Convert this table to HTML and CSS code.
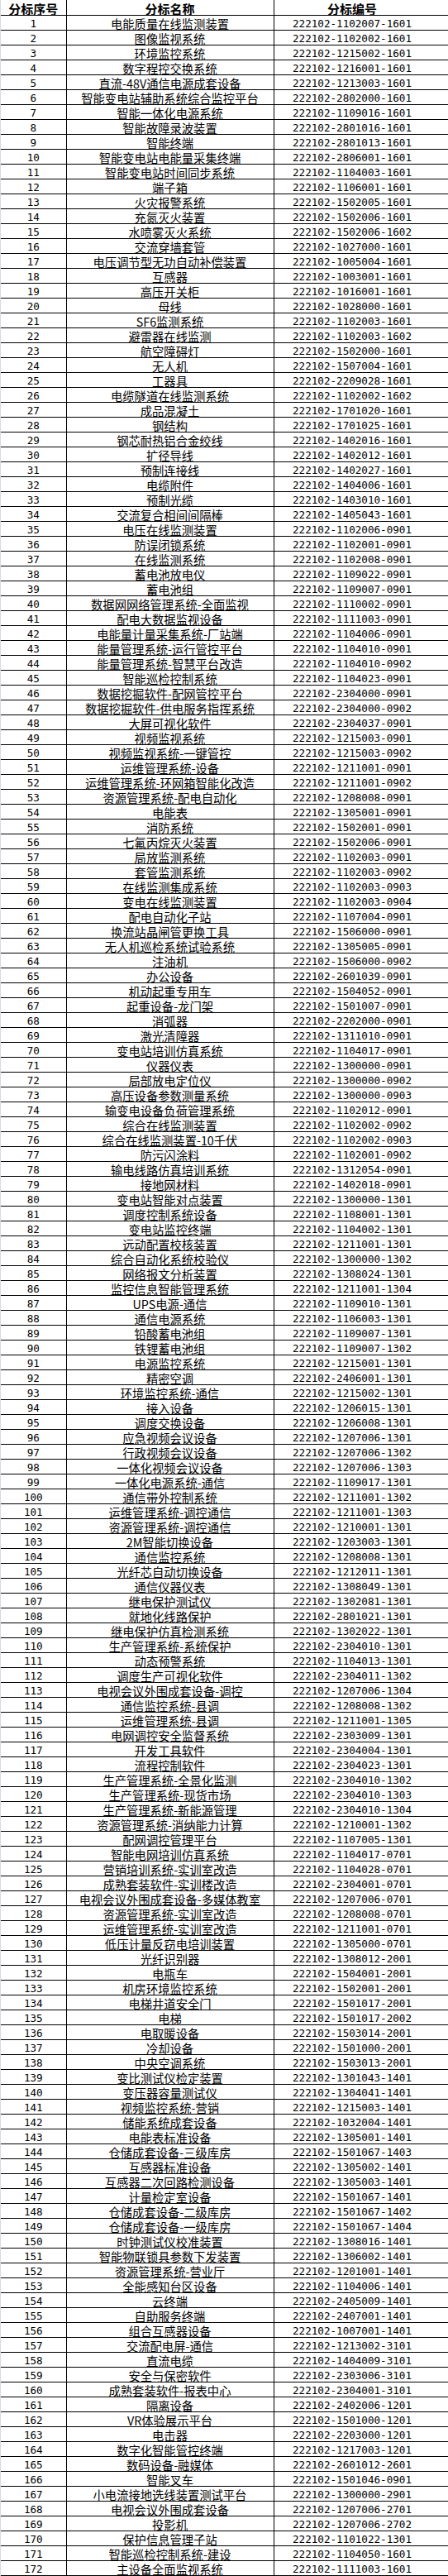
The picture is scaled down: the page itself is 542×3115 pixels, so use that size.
FILE: index.html
```html
<!DOCTYPE html>
<html lang="zh-CN">
<head>
<meta charset="utf-8">
<title>分标</title>
<link rel="stylesheet" href="styles.css">
</head>
<body>
<div class="sheet">
<table class="grid">
<colgroup><col class="c-no"><col class="c-name"><col class="c-code"></colgroup>
<thead>
<tr><th>分标序号</th><th>分标名称</th><th class="code">分标编号</th></tr>
</thead>
<tbody>
<tr><td class="n">1</td><td>电能质量在线监测装置</td><td class="n code">222102-1102007-1601</td></tr>
<tr><td class="n">2</td><td>图像监视系统</td><td class="n code">222102-1102002-1601</td></tr>
<tr><td class="n">3</td><td>环境监控系统</td><td class="n code">222102-1215002-1601</td></tr>
<tr><td class="n">4</td><td>数字程控交换系统</td><td class="n code">222102-1216001-1601</td></tr>
<tr><td class="n">5</td><td>直流-48V通信电源成套设备</td><td class="n code">222102-1213003-1601</td></tr>
<tr><td class="n">6</td><td>智能变电站辅助系统综合监控平台</td><td class="n code">222102-2802000-1601</td></tr>
<tr><td class="n">7</td><td>智能一体化电源系统</td><td class="n code">222102-1109016-1601</td></tr>
<tr><td class="n">8</td><td>智能故障录波装置</td><td class="n code">222102-2801016-1601</td></tr>
<tr><td class="n">9</td><td>智能终端</td><td class="n code">222102-2801013-1601</td></tr>
<tr><td class="n">10</td><td>智能变电站电能量采集终端</td><td class="n code">222102-2806001-1601</td></tr>
<tr><td class="n">11</td><td>智能变电站时间同步系统</td><td class="n code">222102-1104003-1601</td></tr>
<tr><td class="n">12</td><td>端子箱</td><td class="n code">222102-1106001-1601</td></tr>
<tr><td class="n">13</td><td>火灾报警系统</td><td class="n code">222102-1502005-1601</td></tr>
<tr><td class="n">14</td><td>充氮灭火装置</td><td class="n code">222102-1502006-1601</td></tr>
<tr><td class="n">15</td><td>水喷雾灭火系统</td><td class="n code">222102-1502006-1602</td></tr>
<tr><td class="n">16</td><td>交流穿墙套管</td><td class="n code">222102-1027000-1601</td></tr>
<tr><td class="n">17</td><td>电压调节型无功自动补偿装置</td><td class="n code">222102-1005004-1601</td></tr>
<tr><td class="n">18</td><td>互感器</td><td class="n code">222102-1003001-1601</td></tr>
<tr><td class="n">19</td><td>高压开关柜</td><td class="n code">222102-1016001-1601</td></tr>
<tr><td class="n">20</td><td>母线</td><td class="n code">222102-1028000-1601</td></tr>
<tr><td class="n">21</td><td>SF6监测系统</td><td class="n code">222102-1102003-1601</td></tr>
<tr><td class="n">22</td><td>避雷器在线监测</td><td class="n code">222102-1102003-1602</td></tr>
<tr><td class="n">23</td><td>航空障碍灯</td><td class="n code">222102-1502000-1601</td></tr>
<tr><td class="n">24</td><td>无人机</td><td class="n code">222102-1507004-1601</td></tr>
<tr><td class="n">25</td><td>工器具</td><td class="n code">222102-2209028-1601</td></tr>
<tr><td class="n">26</td><td>电缆隧道在线监测系统</td><td class="n code">222102-1102002-1602</td></tr>
<tr><td class="n">27</td><td>成品混凝土</td><td class="n code">222102-1701020-1601</td></tr>
<tr><td class="n">28</td><td>钢结构</td><td class="n code">222102-1701025-1601</td></tr>
<tr><td class="n">29</td><td>钢芯耐热铝合金绞线</td><td class="n code">222102-1402016-1601</td></tr>
<tr><td class="n">30</td><td>扩径导线</td><td class="n code">222102-1402012-1601</td></tr>
<tr><td class="n">31</td><td>预制连接线</td><td class="n code">222102-1402027-1601</td></tr>
<tr><td class="n">32</td><td>电缆附件</td><td class="n code">222102-1404006-1601</td></tr>
<tr><td class="n">33</td><td>预制光缆</td><td class="n code">222102-1403010-1601</td></tr>
<tr><td class="n">34</td><td>交流复合相间间隔棒</td><td class="n code">222102-1405043-1601</td></tr>
<tr><td class="n">35</td><td>电压在线监测装置</td><td class="n code">222102-1102006-0901</td></tr>
<tr><td class="n">36</td><td>防误闭锁系统</td><td class="n code">222102-1102001-0901</td></tr>
<tr><td class="n">37</td><td>在线监测系统</td><td class="n code">222102-1102008-0901</td></tr>
<tr><td class="n">38</td><td>蓄电池放电仪</td><td class="n code">222102-1109022-0901</td></tr>
<tr><td class="n">39</td><td>蓄电池组</td><td class="n code">222102-1109007-0901</td></tr>
<tr><td class="n">40</td><td>数据网网络管理系统-全面监视</td><td class="n code">222102-1110002-0901</td></tr>
<tr><td class="n">41</td><td>配电大数据监视设备</td><td class="n code">222102-1111003-0901</td></tr>
<tr><td class="n">42</td><td>电能量计量采集系统-厂站端</td><td class="n code">222102-1104006-0901</td></tr>
<tr><td class="n">43</td><td>能量管理系统-运行管控平台</td><td class="n code">222102-1104010-0901</td></tr>
<tr><td class="n">44</td><td>能量管理系统-智慧平台改造</td><td class="n code">222102-1104010-0902</td></tr>
<tr><td class="n">45</td><td>智能巡检控制系统</td><td class="n code">222102-1104023-0901</td></tr>
<tr><td class="n">46</td><td>数据挖掘软件-配网管控平台</td><td class="n code">222102-2304000-0901</td></tr>
<tr><td class="n">47</td><td>数据挖掘软件-供电服务指挥系统</td><td class="n code">222102-2304000-0902</td></tr>
<tr><td class="n">48</td><td>大屏可视化软件</td><td class="n code">222102-2304037-0901</td></tr>
<tr><td class="n">49</td><td>视频监视系统</td><td class="n code">222102-1215003-0901</td></tr>
<tr><td class="n">50</td><td>视频监视系统-一键管控</td><td class="n code">222102-1215003-0902</td></tr>
<tr><td class="n">51</td><td>运维管理系统-设备</td><td class="n code">222102-1211001-0901</td></tr>
<tr><td class="n">52</td><td>运维管理系统-环网箱智能化改造</td><td class="n code">222102-1211001-0902</td></tr>
<tr><td class="n">53</td><td>资源管理系统-配电自动化</td><td class="n code">222102-1208008-0901</td></tr>
<tr><td class="n">54</td><td>电能表</td><td class="n code">222102-1305001-0901</td></tr>
<tr><td class="n">55</td><td>消防系统</td><td class="n code">222102-1502001-0901</td></tr>
<tr><td class="n">56</td><td>七氟丙烷灭火装置</td><td class="n code">222102-1502006-0901</td></tr>
<tr><td class="n">57</td><td>局放监测系统</td><td class="n code">222102-1102003-0901</td></tr>
<tr><td class="n">58</td><td>套管监测系统</td><td class="n code">222102-1102003-0902</td></tr>
<tr><td class="n">59</td><td>在线监测集成系统</td><td class="n code">222102-1102003-0903</td></tr>
<tr><td class="n">60</td><td>变电在线监测装置</td><td class="n code">222102-1102003-0904</td></tr>
<tr><td class="n">61</td><td>配电自动化子站</td><td class="n code">222102-1107004-0901</td></tr>
<tr><td class="n">62</td><td>换流站晶闸管更换工具</td><td class="n code">222102-1506000-0901</td></tr>
<tr><td class="n">63</td><td>无人机巡检系统试验系统</td><td class="n code">222102-1305005-0901</td></tr>
<tr><td class="n">64</td><td>注油机</td><td class="n code">222102-1506000-0902</td></tr>
<tr><td class="n">65</td><td>办公设备</td><td class="n code">222102-2601039-0901</td></tr>
<tr><td class="n">66</td><td>机动起重专用车</td><td class="n code">222102-1504052-0901</td></tr>
<tr><td class="n">67</td><td>起重设备-龙门架</td><td class="n code">222102-1501007-0901</td></tr>
<tr><td class="n">68</td><td>消弧器</td><td class="n code">222102-2202000-0901</td></tr>
<tr><td class="n">69</td><td>激光清障器</td><td class="n code">222102-1311010-0901</td></tr>
<tr><td class="n">70</td><td>变电站培训仿真系统</td><td class="n code">222102-1104017-0901</td></tr>
<tr><td class="n">71</td><td>仪器仪表</td><td class="n code">222102-1300000-0901</td></tr>
<tr><td class="n">72</td><td>局部放电定位仪</td><td class="n code">222102-1300000-0902</td></tr>
<tr><td class="n">73</td><td>高压设备参数测量系统</td><td class="n code">222102-1300000-0903</td></tr>
<tr><td class="n">74</td><td>输变电设备负荷管理系统</td><td class="n code">222102-1102012-0901</td></tr>
<tr><td class="n">75</td><td>综合在线监测装置</td><td class="n code">222102-1102002-0902</td></tr>
<tr><td class="n">76</td><td>综合在线监测装置-10千伏</td><td class="n code">222102-1102002-0903</td></tr>
<tr><td class="n">77</td><td>防污闪涂料</td><td class="n code">222102-1102001-0902</td></tr>
<tr><td class="n">78</td><td>输电线路仿真培训系统</td><td class="n code">222102-1312054-0901</td></tr>
<tr><td class="n">79</td><td>接地网材料</td><td class="n code">222102-1402018-0901</td></tr>
<tr><td class="n">80</td><td>变电站智能对点装置</td><td class="n code">222102-1300000-1301</td></tr>
<tr><td class="n">81</td><td>调度控制系统设备</td><td class="n code">222102-1108001-1301</td></tr>
<tr><td class="n">82</td><td>变电站监控终端</td><td class="n code">222102-1104002-1301</td></tr>
<tr><td class="n">83</td><td>远动配置校核装置</td><td class="n code">222102-1211001-1301</td></tr>
<tr><td class="n">84</td><td>综合自动化系统校验仪</td><td class="n code">222102-1300000-1302</td></tr>
<tr><td class="n">85</td><td>网络报文分析装置</td><td class="n code">222102-1308024-1301</td></tr>
<tr><td class="n">86</td><td>监控信息智能管理系统</td><td class="n code">222102-1211001-1304</td></tr>
<tr><td class="n">87</td><td>UPS电源-通信</td><td class="n code">222102-1109010-1301</td></tr>
<tr><td class="n">88</td><td>通信电源系统</td><td class="n code">222102-1106003-1301</td></tr>
<tr><td class="n">89</td><td>铅酸蓄电池组</td><td class="n code">222102-1109007-1301</td></tr>
<tr><td class="n">90</td><td>铁锂蓄电池组</td><td class="n code">222102-1109007-1302</td></tr>
<tr><td class="n">91</td><td>电源监控系统</td><td class="n code">222102-1215001-1301</td></tr>
<tr><td class="n">92</td><td>精密空调</td><td class="n code">222102-2406001-1301</td></tr>
<tr><td class="n">93</td><td>环境监控系统-通信</td><td class="n code">222102-1215002-1301</td></tr>
<tr><td class="n">94</td><td>接入设备</td><td class="n code">222102-1206015-1301</td></tr>
<tr><td class="n">95</td><td>调度交换设备</td><td class="n code">222102-1206008-1301</td></tr>
<tr><td class="n">96</td><td>应急视频会议设备</td><td class="n code">222102-1207006-1301</td></tr>
<tr><td class="n">97</td><td>行政视频会议设备</td><td class="n code">222102-1207006-1302</td></tr>
<tr><td class="n">98</td><td>一体化视频会议设备</td><td class="n code">222102-1207006-1303</td></tr>
<tr><td class="n">99</td><td>一体化电源系统-通信</td><td class="n code">222102-1109017-1301</td></tr>
<tr><td class="n">100</td><td>通信带外控制系统</td><td class="n code">222102-1211001-1302</td></tr>
<tr><td class="n">101</td><td>运维管理系统-调控通信</td><td class="n code">222102-1211001-1303</td></tr>
<tr><td class="n">102</td><td>资源管理系统-调控通信</td><td class="n code">222102-1210001-1301</td></tr>
<tr><td class="n">103</td><td>2M智能切换设备</td><td class="n code">222102-1203003-1301</td></tr>
<tr><td class="n">104</td><td>通信监控系统</td><td class="n code">222102-1208008-1301</td></tr>
<tr><td class="n">105</td><td>光纤芯自动切换设备</td><td class="n code">222102-1212011-1301</td></tr>
<tr><td class="n">106</td><td>通信仪器仪表</td><td class="n code">222102-1308049-1301</td></tr>
<tr><td class="n">107</td><td>继电保护测试仪</td><td class="n code">222102-1302081-1301</td></tr>
<tr><td class="n">108</td><td>就地化线路保护</td><td class="n code">222102-2801021-1301</td></tr>
<tr><td class="n">109</td><td>继电保护仿真检测系统</td><td class="n code">222102-1302022-1301</td></tr>
<tr><td class="n">110</td><td>生产管理系统-系统保护</td><td class="n code">222102-2304010-1301</td></tr>
<tr><td class="n">111</td><td>动态预警系统</td><td class="n code">222102-1104013-1301</td></tr>
<tr><td class="n">112</td><td>调度生产可视化软件</td><td class="n code">222102-2304011-1302</td></tr>
<tr><td class="n">113</td><td>电视会议外围成套设备-调控</td><td class="n code">222102-1207006-1304</td></tr>
<tr><td class="n">114</td><td>通信监控系统-县调</td><td class="n code">222102-1208008-1302</td></tr>
<tr><td class="n">115</td><td>运维管理系统-县调</td><td class="n code">222102-1211001-1305</td></tr>
<tr><td class="n">116</td><td>电网调控安全监督系统</td><td class="n code">222102-2303009-1301</td></tr>
<tr><td class="n">117</td><td>开发工具软件</td><td class="n code">222102-2304004-1301</td></tr>
<tr><td class="n">118</td><td>流程控制软件</td><td class="n code">222102-2304023-1301</td></tr>
<tr><td class="n">119</td><td>生产管理系统-全景化监测</td><td class="n code">222102-2304010-1302</td></tr>
<tr><td class="n">120</td><td>生产管理系统-现货市场</td><td class="n code">222102-2304010-1303</td></tr>
<tr><td class="n">121</td><td>生产管理系统-新能源管理</td><td class="n code">222102-2304010-1304</td></tr>
<tr><td class="n">122</td><td>资源管理系统-消纳能力计算</td><td class="n code">222102-1210001-1302</td></tr>
<tr><td class="n">123</td><td>配网调控管理平台</td><td class="n code">222102-1107005-1301</td></tr>
<tr><td class="n">124</td><td>智能电网培训仿真系统</td><td class="n code">222102-1104017-0701</td></tr>
<tr><td class="n">125</td><td>营销培训系统-实训室改造</td><td class="n code">222102-1104028-0701</td></tr>
<tr><td class="n">126</td><td>成熟套装软件-实训楼改造</td><td class="n code">222102-2304001-0701</td></tr>
<tr><td class="n">127</td><td>电视会议外围成套设备-多媒体教室</td><td class="n code">222102-1207006-0701</td></tr>
<tr><td class="n">128</td><td>资源管理系统-实训室改造</td><td class="n code">222102-1208008-0701</td></tr>
<tr><td class="n">129</td><td>运维管理系统-实训室改造</td><td class="n code">222102-1211001-0701</td></tr>
<tr><td class="n">130</td><td>低压计量反窃电培训装置</td><td class="n code">222102-1305000-0701</td></tr>
<tr><td class="n">131</td><td>光纤识别器</td><td class="n code">222102-1308012-2001</td></tr>
<tr><td class="n">132</td><td>电瓶车</td><td class="n code">222102-1504001-2001</td></tr>
<tr><td class="n">133</td><td>机房环境监控系统</td><td class="n code">222102-1502001-2001</td></tr>
<tr><td class="n">134</td><td>电梯井道安全门</td><td class="n code">222102-1501017-2001</td></tr>
<tr><td class="n">135</td><td>电梯</td><td class="n code">222102-1501017-2002</td></tr>
<tr><td class="n">136</td><td>电取暖设备</td><td class="n code">222102-1503014-2001</td></tr>
<tr><td class="n">137</td><td>冷却设备</td><td class="n code">222102-1501000-2001</td></tr>
<tr><td class="n">138</td><td>中央空调系统</td><td class="n code">222102-1503013-2001</td></tr>
<tr><td class="n">139</td><td>变比测试仪检定装置</td><td class="n code">222102-1301043-1401</td></tr>
<tr><td class="n">140</td><td>变压器容量测试仪</td><td class="n code">222102-1304041-1401</td></tr>
<tr><td class="n">141</td><td>视频监控系统-营销</td><td class="n code">222102-1215003-1401</td></tr>
<tr><td class="n">142</td><td>储能系统成套设备</td><td class="n code">222102-1032004-1401</td></tr>
<tr><td class="n">143</td><td>电能表标准设备</td><td class="n code">222102-1305001-1401</td></tr>
<tr><td class="n">144</td><td>仓储成套设备-三级库房</td><td class="n code">222102-1501067-1403</td></tr>
<tr><td class="n">145</td><td>互感器标准设备</td><td class="n code">222102-1305002-1401</td></tr>
<tr><td class="n">146</td><td>互感器二次回路检测设备</td><td class="n code">222102-1305003-1401</td></tr>
<tr><td class="n">147</td><td>计量检定室设备</td><td class="n code">222102-1501067-1401</td></tr>
<tr><td class="n">148</td><td>仓储成套设备-二级库房</td><td class="n code">222102-1501067-1402</td></tr>
<tr><td class="n">149</td><td>仓储成套设备-一级库房</td><td class="n code">222102-1501067-1404</td></tr>
<tr><td class="n">150</td><td>时钟测试仪校准装置</td><td class="n code">222102-1308016-1401</td></tr>
<tr><td class="n">151</td><td>智能物联锁具参数下发装置</td><td class="n code">222102-1306002-1401</td></tr>
<tr><td class="n">152</td><td>资源管理系统-营业厅</td><td class="n code">222102-1201001-1401</td></tr>
<tr><td class="n">153</td><td>全能感知台区设备</td><td class="n code">222102-1104006-1401</td></tr>
<tr><td class="n">154</td><td>云终端</td><td class="n code">222102-2405009-1401</td></tr>
<tr><td class="n">155</td><td>自助服务终端</td><td class="n code">222102-2407001-1401</td></tr>
<tr><td class="n">156</td><td>组合互感器设备</td><td class="n code">222102-1007001-1401</td></tr>
<tr><td class="n">157</td><td>交流配电屏-通信</td><td class="n code">222102-1213002-3101</td></tr>
<tr><td class="n">158</td><td>直流电缆</td><td class="n code">222102-1404009-3101</td></tr>
<tr><td class="n">159</td><td>安全与保密软件</td><td class="n code">222102-2303006-3101</td></tr>
<tr><td class="n">160</td><td>成熟套装软件-报表中心</td><td class="n code">222102-2304001-3101</td></tr>
<tr><td class="n">161</td><td>隔离设备</td><td class="n code">222102-2402006-1201</td></tr>
<tr><td class="n">162</td><td>VR体验展示平台</td><td class="n code">222102-1501000-1201</td></tr>
<tr><td class="n">163</td><td>电击器</td><td class="n code">222102-2203000-1201</td></tr>
<tr><td class="n">164</td><td>数字化智能管控终端</td><td class="n code">222102-1217003-1201</td></tr>
<tr><td class="n">165</td><td>数码设备-融媒体</td><td class="n code">222102-2601012-2601</td></tr>
<tr><td class="n">166</td><td>智能叉车</td><td class="n code">222102-1501046-0901</td></tr>
<tr><td class="n">167</td><td>小电流接地选线装置测试平台</td><td class="n code">222102-1300000-2901</td></tr>
<tr><td class="n">168</td><td>电视会议外围成套设备</td><td class="n code">222102-1207006-2701</td></tr>
<tr><td class="n">169</td><td>投影机</td><td class="n code">222102-1207006-2702</td></tr>
<tr><td class="n">170</td><td>保护信息管理子站</td><td class="n code">222102-1101022-1301</td></tr>
<tr><td class="n">171</td><td>智能巡检控制系统-建设</td><td class="n code">222102-1104050-1601</td></tr>
<tr><td class="n">172</td><td>主设备全面监视系统</td><td class="n code">222102-1111003-1601</td></tr>
</tbody>
</table>
</div>
</body>
</html>
```
FILE: styles.css
```css
html, body {
  margin: 0;
  padding: 0;
  background: #ffffff;
}

.sheet {
  width: 542px;
  border-left: 1px solid #d4dbe6;
  box-sizing: border-box;
}

.grid {
  border-collapse: collapse;
  table-layout: fixed;
  width: 541px;
  font-family: "Noto Sans CJK SC", "Noto Sans", sans-serif;
  font-size: 14.3px;
  color: #000000;
}

.c-no { width: 79px; }
.c-name { width: 251px; }
.c-code { width: 211px; }

.grid th,
.grid td {
  border: 1px solid #000000;
  height: 15px;
  padding: 2px 0 0 0;
  line-height: 15px;
  text-align: center;
  vertical-align: bottom;
  white-space: nowrap;
  font-weight: 400;
}

.grid tr:first-child th {
  border-top: 0;
  padding-top: 3px;
}

.grid tr td:first-child,
.grid tr th:first-child { border-left: 0; }

.grid th {
  font-weight: 700;
  font-size: 15px;
}

.grid .code {
  padding-right: 21px;
}

.grid td.n {
  font-family: "DejaVu Sans Mono", "Liberation Mono", monospace;
  font-size: 12.6px;
}
```
